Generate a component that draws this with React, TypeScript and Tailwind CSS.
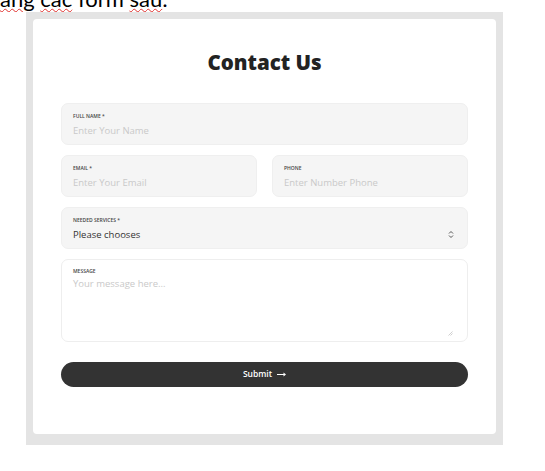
import React from 'react';

export default function App() {
  const squiggle = "underline decoration-wavy decoration-[#e0322f] decoration-[1px] underline-offset-[1px]";
  return (
    <div className="w-[545px] h-[471px] bg-white overflow-hidden" style={{ fontFamily: '"Open Sans", sans-serif' }}>
      <div className="h-[12px] overflow-hidden relative">
        <div className="absolute left-0 top-[-14px] text-[22px] leading-[26px] text-black whitespace-nowrap" style={{ fontFamily: '"Lato", sans-serif' }}>
          <span className={squiggle}>ang</span> <span className={squiggle}>các</span> form <span className={squiggle}>sau</span>:
        </div>
      </div>

      <div className="ml-[26px] w-[477px] h-[433px] bg-[#e4e4e4] p-[7px] pb-[11px]">
        <div className="h-full bg-white rounded-[4px] px-[28px] pt-[31px]">
          <h1 className="text-center text-[20.5px] leading-[24px] font-extrabold text-[#222] mb-[29px]" style={{ fontFamily: '"Open Sans", sans-serif' }}>
            Contact Us
          </h1>

          <div className="flex flex-col gap-[10px]">
            <Field label="FULL NAME *" placeholder="Enter Your Name" />
            <div className="grid grid-cols-2 gap-[15px]">
              <Field label="EMAIL *" placeholder="Enter Your Email" />
              <Field label="PHONE" placeholder="Enter Number Phone" />
            </div>
            <div className="h-[42px] bg-[#f5f5f5] border border-[#efefef] rounded-[7px] px-[11px] pt-[9px] relative">
              <div className="text-[5px] leading-[6px] font-semibold text-[#444] uppercase">NEEDED SERVICES *</div>
              <div className="text-[9.5px] leading-[14px] mt-[5px] text-[#333] font-medium">Please chooses</div>
              <svg className="absolute right-[13px] top-[22px]" width="6" height="9" viewBox="0 0 6 9" fill="none" stroke="#555" strokeWidth="1">
                <path d="M1 3.5 L3 1.5 L5 3.5" />
                <path d="M1 5.5 L3 7.5 L5 5.5" />
              </svg>
            </div>
            <div className="h-[83px] bg-white border border-[#eeeeee] rounded-[7px] px-[11px] pt-[8px] relative">
              <div className="text-[5px] leading-[6px] font-semibold text-[#444] uppercase">MESSAGE</div>
              <div className="text-[9.5px] leading-[14px] mt-[3px] text-[#c9c9c9] font-medium">Your message here...</div>
              <svg className="absolute right-[14px] bottom-[5px]" width="5" height="5" viewBox="0 0 5 5" stroke="#bbb" strokeWidth="0.7">
                <path d="M0.5 4.5 L4.5 0.5 M2.5 4.5 L4.5 2.5" />
              </svg>
            </div>
          </div>

          <button className="mt-[20px] w-full h-[25px] rounded-full bg-[#333333] text-white text-[8.5px] font-semibold flex items-center justify-center gap-[5px]">
            Submit
            <svg width="9" height="5" viewBox="0 0 9 5" fill="white">
              <path d="M0 2 H6.5 V0.5 L9 2.5 L6.5 4.5 V3 H0 Z" />
            </svg>
          </button>
        </div>
      </div>
    </div>
  );
}

function Field({ label, placeholder }: { label: string; placeholder: string }) {
  return (
    <div className="h-[42px] bg-[#f5f5f5] border border-[#efefef] rounded-[7px] px-[11px] pt-[9px]">
      <div className="text-[5px] leading-[6px] font-semibold text-[#444] uppercase">{label}</div>
      <div className="text-[9.5px] leading-[14px] mt-[5px] text-[#c9c9c9] font-medium">{placeholder}</div>
    </div>
  );
}
